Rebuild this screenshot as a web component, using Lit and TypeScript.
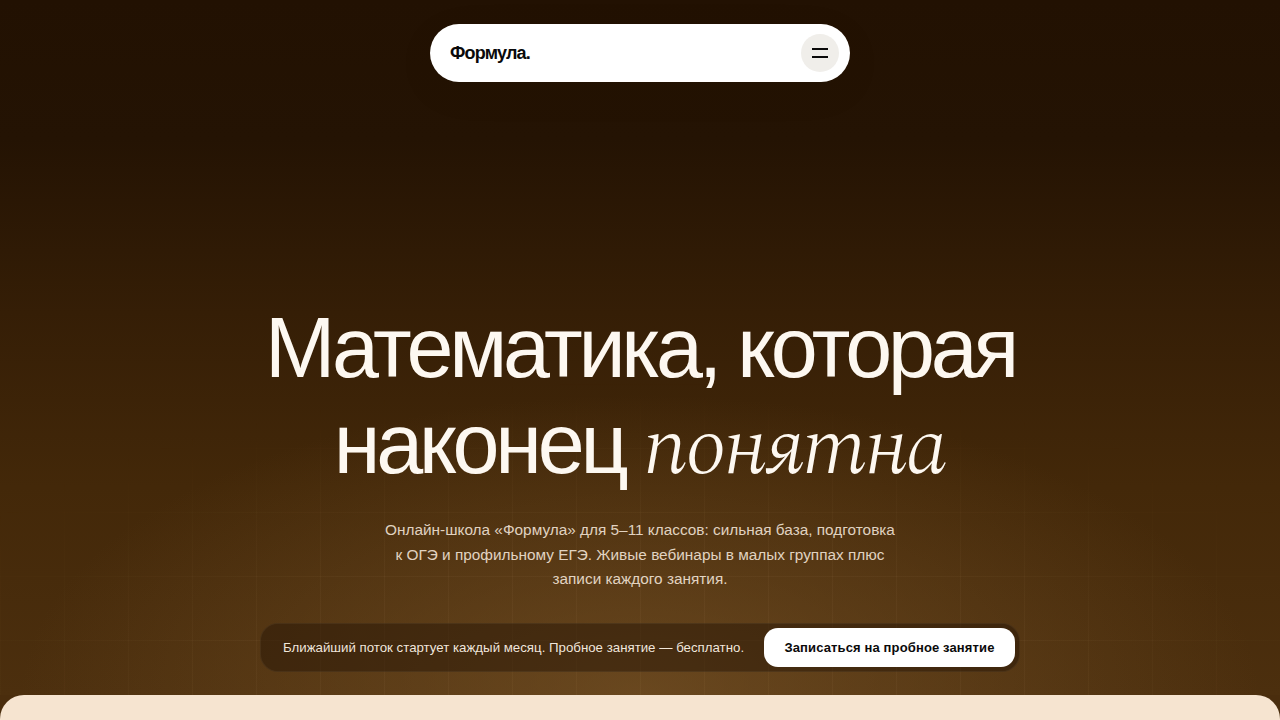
import { LitElement, html, css } from "lit";
import { customElement } from "lit/decorators.js";

@customElement("app-root")
export class AppRoot extends LitElement {
  static styles = css`
    :host { display: block; font-family: "Liberation Sans", Arial, sans-serif; }
    * { box-sizing: border-box; }
    .page { height: 720px; overflow: hidden; display: flex; flex-direction: column; background: #4a2d0d; }
    .hero {
      position: relative; height: 695px; flex: none; display: flex; flex-direction: column; align-items: center;
      padding-top: 24px;
      background:
        radial-gradient(ellipse 620px 300px at 50% 100%, rgba(125,88,42,0.6), rgba(125,88,42,0) 100%),
        linear-gradient(180deg, #221102 0%, #241303 20%, #351e06 45%, #432809 70%, #4c2f0e 100%);
    }
    .grid {
      position: absolute; inset: 0; pointer-events: none;
      background-image:
        linear-gradient(to right, rgba(255,220,170,0.04) 1px, transparent 1px),
        linear-gradient(to bottom, rgba(255,220,170,0.04) 1px, transparent 1px);
      background-size: 64px 64px;
      -webkit-mask-image: radial-gradient(ellipse 800px 320px at 50% 100%, #000 50%, transparent 100%);
      mask-image: radial-gradient(ellipse 800px 320px at 50% 100%, #000 50%, transparent 100%);
    }
    .nav {
      position: relative; width: 420px; height: 58px; border-radius: 29px; background: #fff;
      display: flex; align-items: center; justify-content: space-between; padding: 0 11px 0 20px;
      box-shadow: 0 10px 40px rgba(0,0,0,0.06);
    }
    .logo { font-size: 18px; font-weight: 700; letter-spacing: -0.045em; color: #0a0a0a; }
    .burger { width: 38px; height: 38px; border-radius: 50%; background: #f0eeea; border: 0; padding: 0; display: flex; flex-direction: column; align-items: center; justify-content: center; gap: 6px; }
    .burger i { display: block; width: 16px; height: 2px; background: #0a0a0a; }
    .content { position: relative; display: flex; flex-direction: column; align-items: center; margin-top: auto; padding-bottom: 23px; }
    h1 { margin: 0; font-size: 84.48px; line-height: 96px; font-weight: 400; letter-spacing: -0.05em; color: #fdf8f1; text-align: center; white-space: nowrap; }
    h1 em { font-family: "Spectral", "Liberation Serif", serif; font-style: italic; font-weight: 300; letter-spacing: -0.02em; }
    p { margin: 22px 0 0; width: 520px; font-size: 15.36px; line-height: 24.58px; color: rgba(253,240,225,0.85); text-align: center; }
    .cta {
      margin-top: 31px; width: 760px; height: 49px; border-radius: 18px; background: rgba(40,22,6,0.5);
      border: 1px solid rgba(255,230,200,0.06);
      display: flex; align-items: center; justify-content: space-between; padding: 0 4px 0 22px;
    }
    .cta span { font-size: 13.28px; color: rgba(253,244,232,0.95); }
    .cta button { width: 251px; height: 39px; border: 0; border-radius: 14px; background: #fff; color: #0a0a0a; font: 700 13px "Liberation Sans", Arial, sans-serif; letter-spacing: 0.01em; }
    .sheet { height: 25px; background: #f6e4d0; border-radius: 24px 24px 0 0; }
  `;
  render() {
    return html`<div class="page">
      <section class="hero">
        <div class="grid"></div>
        <nav class="nav"><div class="logo">Формула.</div><button class="burger" aria-label="Меню"><i></i><i></i></button></nav>
        <div class="content">
          <h1>Математика, которая<br />наконец <em>понятна</em></h1>
          <p>Онлайн-школа «Формула» для 5–11 классов: сильная база, подготовка к ОГЭ и профильному ЕГЭ. Живые вебинары в малых группах плюс записи каждого занятия.</p>
          <div class="cta"><span>Ближайший поток стартует каждый месяц. Пробное занятие — бесплатно.</span><button>Записаться на пробное занятие</button></div>
        </div>
      </section>
      <div class="sheet"></div>
    </div>`;
  }
}
